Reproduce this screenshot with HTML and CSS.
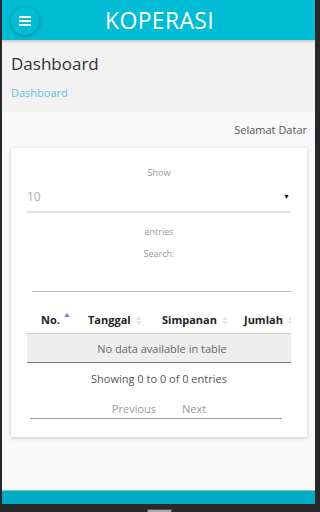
FILE: index.html
```html
<!DOCTYPE html>
<html>
<head>
    <title>Koperasi</title>
    <link rel="stylesheet" href="styles.css">
</head>
<body>
    <div class="screen">
        <!-- Top bar -->
        <header class="topbar">
            <button class="menu-btn">
                <svg width="12" height="10" viewBox="0 0 12 10">
                    <rect x="0" y="0" width="12" height="2" fill="#fff"/>
                    <rect x="0" y="4" width="12" height="2" fill="#fff"/>
                    <rect x="0" y="8" width="12" height="2" fill="#fff"/>
                </svg>
            </button>
            <div class="brand">KOPERASI</div>
        </header>

        <!-- Page heading -->
        <div class="page-head">
            <h1>Dashboard</h1>
            <a class="crumb" href="#">Dashboard</a>
        </div>

        <div class="content">
            <div class="welcome">Selamat Datar</div>

            <div class="card">
                <div class="dt-label">Show</div>
                <div class="dt-select">
                    <span>10</span>
                    <span class="caret">&#9660;</span>
                </div>
                <div class="dt-label entries">entries</div>
                <div class="dt-label search">Search:</div>
                <div class="dt-input"></div>

                <div class="table-wrap">
                    <table class="dt-table">
                        <thead>
                            <tr>
                                <th class="col-no">No.<span class="sort asc"></span></th>
                                <th class="col-date">Tanggal<span class="sort"></span></th>
                                <th class="col-type">Simpanan<span class="sort"></span></th>
                                <th class="col-sum">Jumlah<span class="sort"></span></th>
                            </tr>
                        </thead>
                        <tbody>
                            <tr>
                                <td colspan="4" class="empty">No data available in table</td>
                            </tr>
                        </tbody>
                    </table>
                </div>

                <div class="dt-info">Showing 0 to 0 of 0 entries</div>
                <div class="dt-paging">
                    <span>Previous</span>
                    <span>Next</span>
                </div>
            </div>
        </div>

        <footer class="bottombar"></footer>
    </div>
    <div class="nav-tab"></div>
</body>
</html>
```

FILE: styles.css
```css
html, body {
    margin: 0;
    padding: 0;
}
body {
    background: #28282c;
    font-family: "Open Sans", "Noto Sans", sans-serif;
    width: 320px;
    height: 512px;
    overflow: hidden;
    position: relative;
}
.screen {
    margin-left: 2px;
    width: 313px;
    height: 504px;
    background: #f9f9f9;
    display: flex;
    flex-direction: column;
    overflow: hidden;
}
.topbar {
    height: 40px;
    flex: none;
    background: #00bcd4;
    display: flex;
    align-items: center;
    position: relative;
    box-shadow: 0 1px 3px rgba(0,0,0,0.25);
    z-index: 2;
}
.menu-btn {
    position: absolute;
    left: 9px;
    top: 7px;
    width: 28px;
    height: 28px;
    border-radius: 50%;
    border: none;
    background: #00bcd4;
    box-shadow: 0 1px 4px rgba(0,0,0,0.3);
    display: flex;
    align-items: center;
    justify-content: center;
    padding: 0;
}
.brand {
    width: 100%;
    text-align: center;
    color: #fff;
    font-size: 23px;
    letter-spacing: 0.3px;
    padding-left: 2px;
}
.page-head {
    background: #f2f2f2;
    height: 72px;
    flex: none;
    padding: 0 9px;
    box-sizing: border-box;
}
.page-head h1 {
    margin: 0;
    padding-top: 12px;
    font-size: 17px;
    font-weight: 400;
    color: #333;
    line-height: 24px;
}
.crumb {
    display: block;
    margin-top: 9px;
    font-size: 11px;
    color: #5bc4dc;
    text-decoration: none;
    line-height: 16px;
}
.content {
    flex: 1;
    padding: 0 8px 0 9px;
}
.welcome {
    text-align: right;
    font-size: 11px;
    color: #555;
    line-height: 16px;
    margin-top: 10px;
}
.card {
    background: #fff;
    margin-top: 10px;
    padding: 17px 16px 18px;
    box-shadow: 0 1px 4px rgba(0,0,0,0.2);
}
.dt-label {
    text-align: center;
    font-size: 9px;
    color: #999;
    line-height: 16px;
}
.dt-select {
    height: 30px;
    border-bottom: 2px solid #e2e2e2;
    display: flex;
    align-items: center;
    justify-content: space-between;
    font-size: 12px;
    color: #aaa;
}
.caret {
    color: #111;
    font-size: 7px;
    margin-right: 1px;
}
.entries {
    margin-top: 12px;
    height: 10px;
    line-height: 14px;
    overflow: hidden;
}
.search {
    margin-top: 12px;
    line-height: 14px;
}
.dt-input {
    height: 30px;
    margin-left: 5px;
    border-bottom: 1px solid #bbb;
}
.table-wrap {
    margin-top: 14px;
    overflow: hidden;
}
.dt-table {
    border-collapse: collapse;
    width: 300px;
    font-size: 11px;
}
.dt-table th {
    height: 27px;
    text-align: left;
    color: #222;
    font-weight: 700;
    white-space: nowrap;
    border-bottom: 1px solid #ccc;
    padding: 0 0 0 12px;
}
.dt-table th.col-no { padding-left: 14px; width: 35px; }
.dt-table th.col-date { width: 62px; }
.dt-table th.col-type { width: 70px; }
.sort {
    display: inline-block;
    width: 0;
    height: 0;
    margin-left: 5px;
    border-left: 3px solid transparent;
    border-right: 3px solid transparent;
    border-bottom: 4px solid #e6e6e6;
    position: relative;
    top: -4px;
}
.sort::after {
    content: "";
    position: absolute;
    left: -3px;
    top: 5px;
    border-left: 3px solid transparent;
    border-right: 3px solid transparent;
    border-top: 4px solid #e6e6e6;
}
.sort.asc {
    border-bottom-color: #7b82d9;
    top: -7px;
    margin-left: 4px;
}
.sort.asc::after {
    display: none;
}
.empty {
    background: #eee;
    height: 28px;
    text-align: center;
    color: #666;
    border-bottom: 1px solid #777;
    padding: 0 30px 0 0;
}
.dt-info {
    margin-top: 8px;
    text-align: center;
    font-size: 11px;
    color: #555;
    line-height: 16px;
}
.dt-paging {
    margin: 13px 9px 0 3px;
    height: 18px;
    line-height: 18px;
    border-bottom: 1px solid #999;
    font-size: 11px;
    color: #999;
    display: flex;
    justify-content: center;
    gap: 26px;
    padding-left: 6px;
}
.bottombar {
    margin-top: auto;
    height: 13px;
    flex: none;
    background: #00acc4;
    border-top: 1px solid #7fc5d3;
}
.nav-tab {
    position: absolute;
    left: 147px;
    top: 509px;
    width: 25px;
    height: 4px;
    background: #aaa;
    border: 1px solid #555;
    box-sizing: border-box;
}
```
